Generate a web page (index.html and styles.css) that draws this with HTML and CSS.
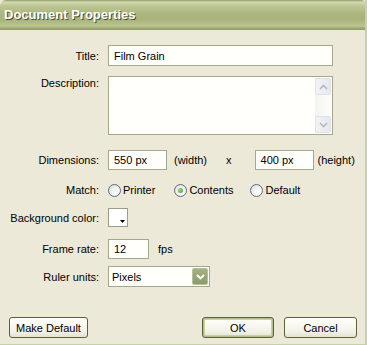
FILE: index.html
```html
<!DOCTYPE html>
<html>
<head>
<meta charset="utf-8">
<link rel="stylesheet" href="styles.css">
</head>
<body>
<div class="window">
  <div class="titlebar"><span class="title">Document Properties</span></div>
  <div class="content">
    <div class="row r-title">
      <label class="lbl">Title:</label>
      <div class="field wide">Film Grain</div>
    </div>
    <div class="row r-desc">
      <label class="lbl top">Description:</label>
      <div class="field wide area">
        <div class="scroll">
          <div class="sbtn"><svg width="9" height="6" viewBox="0 0 9 6"><path d="M1 5 L4.5 1.5 L8 5" fill="none" stroke="#b3b8c2" stroke-width="1.6"/></svg></div>
          <div class="strack"></div>
          <div class="sbtn"><svg width="9" height="6" viewBox="0 0 9 6"><path d="M1 1 L4.5 4.5 L8 1" fill="none" stroke="#b3b8c2" stroke-width="1.6"/></svg></div>
        </div>
      </div>
    </div>
    <div class="row r-dim">
      <label class="lbl">Dimensions:</label>
      <div class="field px">550 px</div>
      <span class="txt w">(width)</span>
      <span class="txt x">x</span>
      <div class="field px">400 px</div>
      <span class="txt h">(height)</span>
    </div>
    <div class="row r-match">
      <label class="lbl">Match:</label>
      <span class="radio"></span><span class="rtxt r1">Printer</span>
      <span class="radio on"></span><span class="rtxt r2">Contents</span>
      <span class="radio"></span><span class="rtxt">Default</span>
    </div>
    <div class="row r-bg">
      <label class="lbl">Background color:</label>
      <div class="swatch"><svg class="tri" width="5" height="3" viewBox="0 0 5 3"><path d="M0 0 H5 L2.5 3 Z" fill="#000"/></svg></div>
    </div>
    <div class="row r-fr">
      <label class="lbl">Frame rate:</label>
      <div class="field fr">12</div>
      <span class="txt fps">fps</span>
    </div>
    <div class="row r-ru">
      <label class="lbl">Ruler units:</label>
      <div class="field sel">Pixels<span class="arrow"><svg width="9" height="6" viewBox="0 0 9 6"><path d="M1 1 L4.5 4.5 L8 1" fill="none" stroke="#fff" stroke-width="1.8"/></svg></span></div>
    </div>
  </div>
  <div class="buttons">
    <button class="btn mk">Make Default</button>
    <div class="spacer"></div>
    <button class="btn ok">OK</button>
    <button class="btn cancel">Cancel</button>
  </div>
</div>
</body>
</html>
```
FILE: styles.css
```css
html, body {
  margin: 0;
  padding: 0;
  background: #ece9d8;
}
body {
  width: 367px;
  height: 345px;
  overflow: hidden;
  font-family: "Liberation Sans", Arial, sans-serif;
  font-size: 11px;
  color: #000;
}
.window {
  width: 365px;
  height: 344px;
  border-right: 2px solid #c9cfa8;
  border-bottom: 1px solid #c9cfa8;
  background: #ece9d8;
  position: relative;
}
.titlebar {
  height: 30px;
  border-top-left-radius: 6px;
  border-top-right-radius: 4px;
  background: linear-gradient(to bottom, #8e9b63 0px, #d2d9b2 2px, #bdc692 6px, #aab57f 14px, #a9b47d 20px, #bcc590 26px, #a3ad78 28px, #8d9861 30px);
  box-sizing: border-box;
  padding: 7px 0 0 4px;
}
.title {
  font-family: "Liberation Sans", Arial, sans-serif;
  font-weight: bold;
  font-size: 13px;
  color: #fff;
  text-shadow: 1px 1px 0 #4a5128;
}
.content {
  padding-top: 15px;
}
.row {
  display: flex;
  align-items: center;
}
.lbl {
  width: 100px;
  box-sizing: border-box;
  padding-right: 1px;
  text-align: right;
  margin-right: 8px;
  flex: none;
}
.lbl.top {
  align-self: flex-start;
  padding-top: 1px;
}
.field {
  box-sizing: border-box;
  border: 1px solid #a5a98c;
  background: #fffffb;
  display: flex;
  align-items: center;
  padding-left: 5px;
}
.wide { width: 225px; }
.r-title .field { height: 21px; }
.r-desc { margin-top: 10px; align-items: flex-start; }
.area {
  height: 59px;
  justify-content: flex-end;
  align-items: stretch;
  padding: 1px;
}
.scroll {
  width: 16px;
  display: flex;
  flex-direction: column;
  background: linear-gradient(to right, #f3f3ef, #fdfdfb);
}
.sbtn {
  height: 17px;
  box-sizing: border-box;
  border: 1px solid #e0e2e6;
  border-radius: 2px;
  background: linear-gradient(to right, #f2f3f6, #e6e8ee);
  display: flex;
  align-items: center;
  justify-content: center;
}
.strack { flex: 1; }
.r-dim { margin-top: 15px; }
.px { width: 59px; height: 20px; }
.txt.w { margin-left: 7px; }
.txt.x { margin-left: 19px; margin-right: 23px; }
.txt.h { margin-left: 4px; }
.r-match { margin-top: 11px; height: 18px; }
.radio {
  width: 13px;
  height: 13px;
  box-sizing: border-box;
  border: 1px solid #5b6b8a;
  border-radius: 50%;
  background: radial-gradient(circle at 65% 65%, #ffffff 0, #f2f3f0 40%, #d5d8d0 100%);
  margin-right: 2px;
  position: relative;
  flex: none;
}
.radio.on::after {
  content: "";
  position: absolute;
  left: 3px;
  top: 3px;
  width: 5px;
  height: 5px;
  border-radius: 50%;
  background: radial-gradient(circle at 40% 40%, #a8d890, #3f8a2e);
}
.rtxt.r1 { margin-right: 19px; }
.rtxt.r2 { margin-right: 17px; }
.r-bg { margin-top: 9px; }
.swatch {
  width: 20px;
  height: 19px;
  box-sizing: border-box;
  border: 1px solid #9a9d8a;
  background: #fff;
  position: relative;
}
.tri {
  position: absolute;
  right: 2px;
  bottom: 3px;
}
.r-fr { margin-top: 12px; }
.fr { width: 41px; height: 20px; }
.fps { margin-left: 9px; }
.r-ru { margin-top: 7px; }
.sel {
  width: 102px;
  height: 21px;
  justify-content: space-between;
  padding: 1px 1px 1px 3px;
}
.arrow {
  width: 16px;
  height: 17px;
  box-sizing: border-box;
  background: linear-gradient(to bottom, #a4b283, #8c9b6a);
  border: 1px solid #b7c09a;
  border-radius: 2px;
  display: flex;
  align-items: center;
  justify-content: center;
}
.buttons {
  display: flex;
  padding: 0 8px 0 9px;
  margin-top: 30px;
}
.spacer { flex: 1; }
.btn {
  font-family: "Liberation Sans", Arial, sans-serif;
  font-size: 11px;
  color: #000;
  height: 21px;
  box-sizing: border-box;
  border: 1px solid #5b6138;
  border-radius: 3px;
  background: linear-gradient(to bottom, #fffffb, #f3f2e8 70%, #e4e2d2);
  padding: 0;
}
.mk { width: 79px; }
.ok {
  width: 72px;
  box-shadow: inset 0 0 0 1px #b3be8a, inset 0 0 0 2px #c9d1a2;
  margin-right: 10px;
}
.cancel { width: 73px; }
```
